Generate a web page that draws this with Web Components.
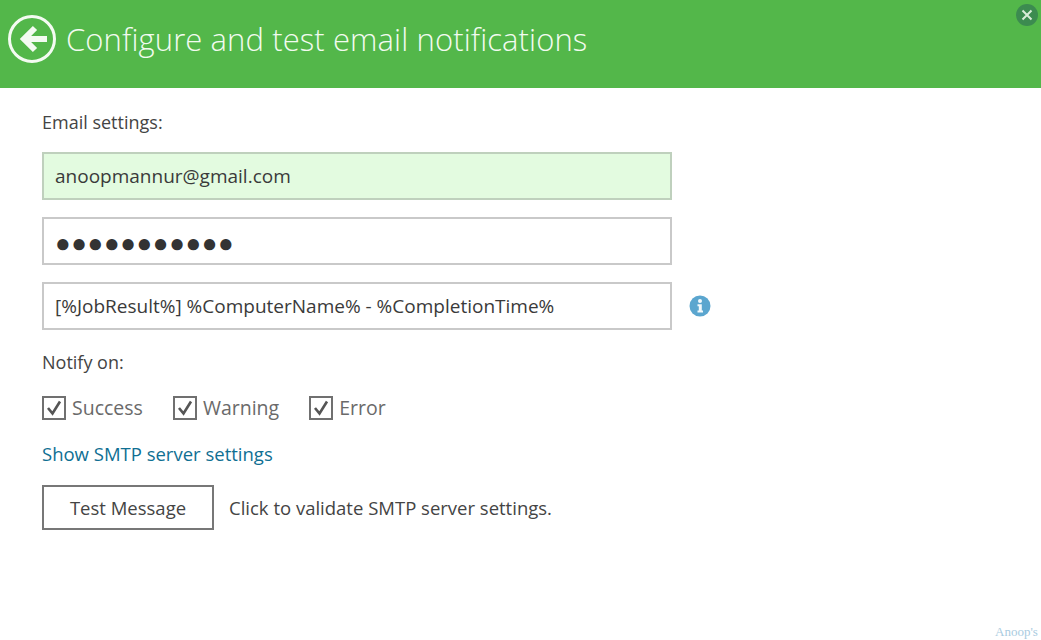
<!DOCTYPE html>
<html>
<head>
<meta charset="utf-8">
<title>Configure and test email notifications</title>
<style>
  html, body { margin: 0; height: 100%; background: #fff; }
  body { font-family: "Open Sans", "Noto Sans", sans-serif; color: #3c3c3c; overflow: hidden; }
</style>
</head>
<body>
<notify-page></notify-page>

<script>
class TitleBar extends HTMLElement {
  constructor() {
    super();
    this.attachShadow({ mode: 'open' });
    this.shadowRoot.innerHTML = `
      <style>
        :host { display: flex; align-items: center; height: 88px; background: #53b74a; color: #f2fbf0; position: relative; padding: 0 0 10px 8px; box-sizing: border-box; }
        svg.back { width: 48px; height: 48px; flex: none; }
        h1 { margin: 0 0 0 10px; font-size: 31px; font-weight: 300; letter-spacing: 0.1px; white-space: nowrap; }
        .close { position: absolute; top: 4px; right: 3px; width: 22px; height: 22px; }
      </style>
      <svg class="back" viewBox="0 0 48 48">
        <circle cx="24" cy="24" r="22.5" fill="none" stroke="#f4fbf2" stroke-width="3"/>
        <path d="M27 13 L16 24 L27 35 M17 24 H39" fill="none" stroke="#f4fbf2" stroke-width="6"/>
      </svg>
      <h1><slot></slot></h1>
      <svg class="close" viewBox="0 0 22 22">
        <circle cx="11" cy="11" r="11" fill="#3c8b50"/>
        <path d="M6.5 6.5 L15.5 15.5 M15.5 6.5 L6.5 15.5" stroke="#d8ecd8" stroke-width="2"/>
      </svg>
    `;
  }
}
customElements.define('title-bar', TitleBar);

class TextField extends HTMLElement {
  constructor() {
    super();
    this.attachShadow({ mode: 'open' });
    this.shadowRoot.innerHTML = `
      <style>
        :host { display: flex; align-items: center; box-sizing: border-box; width: 630px; height: 48px; padding: 0 11px; border: 2px solid #c9c9c9; background: #fff; font-size: 19px; color: #3a3a3a; white-space: nowrap; }
        :host([valid]) { background: #e3fbe0; border-color: #bfd0bd; }
        :host([secret]) { font-size: 26px; letter-spacing: 0.6px; color: #333; padding-top: 2px; }
      </style>
      <slot></slot>
    `;
  }
}
customElements.define('text-field', TextField);

class CheckOption extends HTMLElement {
  constructor() {
    super();
    this.attachShadow({ mode: 'open' });
    this.shadowRoot.innerHTML = `
      <style>
        :host { display: inline-flex; align-items: center; font-size: 19.5px; color: #6a6a6a; }
        svg { width: 24px; height: 24px; margin-right: 6px; flex: none; }
      </style>
      <svg viewBox="0 0 24 24">
        <rect x="1" y="1" width="22" height="22" fill="none" stroke="#707070" stroke-width="2"/>
        <path d="M6 12 L10.5 17.5 L18 5.5" fill="none" stroke="#555" stroke-width="2.6"/>
      </svg>
      <slot></slot>
    `;
  }
}
customElements.define('check-option', CheckOption);

class InfoIcon extends HTMLElement {
  constructor() {
    super();
    this.attachShadow({ mode: 'open' });
    this.shadowRoot.innerHTML = `
      <style>
        :host { display: block; width: 22px; height: 22px; }
        svg { display: block; }
      </style>
      <svg width="22" height="22" viewBox="0 0 22 22">
        <circle cx="11" cy="11" r="10.5" fill="#5ba6cf"/>
        <circle cx="11" cy="6" r="2" fill="#f2f9fc"/>
        <path d="M8.5 9.2 H12.8 V15.4 H14 V17.4 H8.5 V15.4 H9.8 V11.2 H8.5 Z" fill="#f2f9fc"/>
      </svg>
    `;
  }
}
customElements.define('info-icon', InfoIcon);

class PlainButton extends HTMLElement {
  constructor() {
    super();
    this.attachShadow({ mode: 'open' });
    this.shadowRoot.innerHTML = `
      <style>
        :host { display: flex; align-items: center; justify-content: center; box-sizing: border-box; width: 172px; height: 45px; border: 2px solid #777; font-size: 18.5px; color: #444; background: #fff; }
      </style>
      <slot></slot>
    `;
  }
}
customElements.define('plain-button', PlainButton);

class NotifyPage extends HTMLElement {
  constructor() {
    super();
    this.attachShadow({ mode: 'open' });
    this.shadowRoot.innerHTML = `
      <style>
        :host { display: block; height: 640px; position: relative; overflow: hidden; }
        main { padding: 20px 0 0 42px; display: flex; flex-direction: column; align-items: flex-start; }
        .label { font-size: 18px; line-height: 28px; color: #444; }
        .fields { display: flex; flex-direction: column; gap: 17px; margin-top: 16px; }
        .row { display: flex; align-items: center; gap: 17px; }
        .notify { margin-top: 18px; }
        .checks { display: flex; gap: 30px; margin-top: 18px; }
        a { margin-top: 19px; font-size: 18.5px; line-height: 28px; color: #0f6f93; text-decoration: none; }
        .test { display: flex; align-items: center; gap: 15px; margin-top: 17px; font-size: 18.5px; color: #444; }
        .mark { position: absolute; left: 995px; top: 624px; font: 13px "Liberation Serif", serif; color: #a9cbe0; white-space: nowrap; }
      </style>
      <title-bar>Configure and test email notifications</title-bar>
      <main>
        <div class="label">Email settings:</div>
        <div class="fields">
          <text-field valid>anoopmannur@gmail.com</text-field>
          <text-field secret>●●●●●●●●●●●</text-field>
          <div class="row">
            <text-field>[%JobResult%] %ComputerName% - %CompletionTime%</text-field>
            <info-icon></info-icon>
          </div>
        </div>
        <div class="label notify">Notify on:</div>
        <div class="checks">
          <check-option>Success</check-option>
          <check-option>Warning</check-option>
          <check-option>Error</check-option>
        </div>
        <a href="#">Show SMTP server settings</a>
        <div class="test">
          <plain-button>Test Message</plain-button>
          <span>Click to validate SMTP server settings.</span>
        </div>
      </main>
      <div class="mark">Anoop's</div>
    `;
  }
}
customElements.define('notify-page', NotifyPage);
</script>
</body>
</html>
